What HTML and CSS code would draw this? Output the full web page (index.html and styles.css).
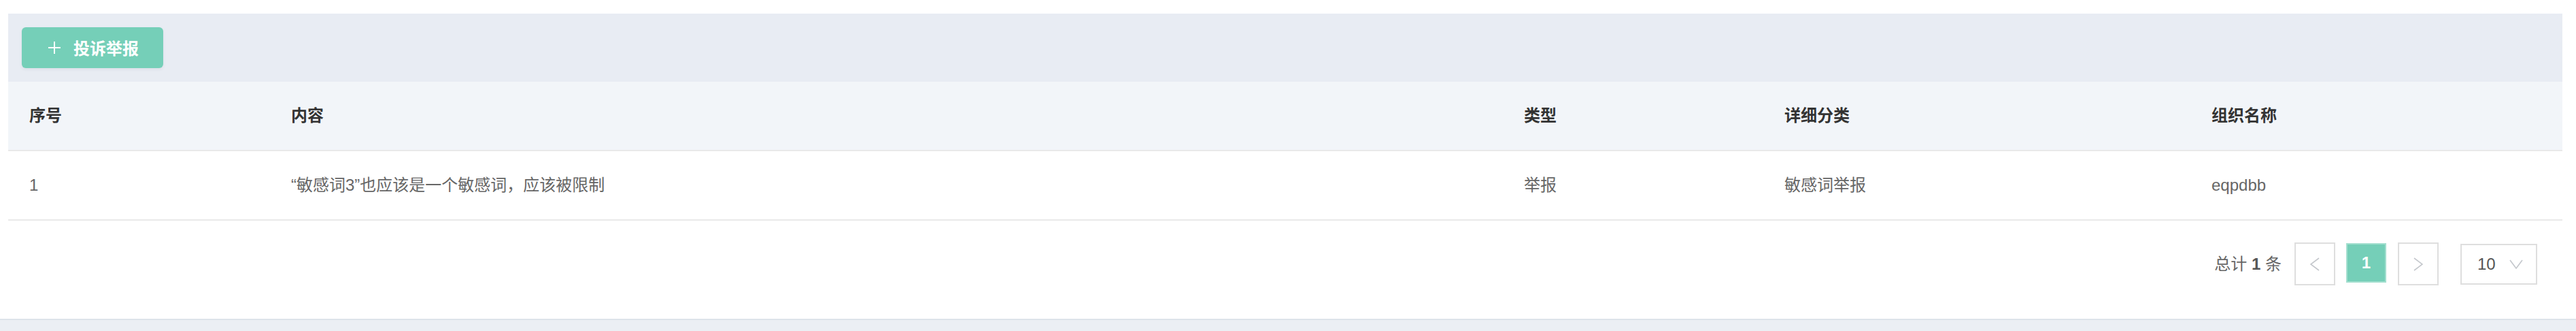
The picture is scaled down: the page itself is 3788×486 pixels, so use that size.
FILE: index.html
```html
<!DOCTYPE html>
<html lang="zh-CN">
<head>
<meta charset="utf-8">
<title>投诉举报</title>
<link rel="stylesheet" href="styles.css">
</head>
<body>
<div class="page">
  <div class="panel">
    <div class="toolbar">
      <button class="btn-add" type="button">
        <svg class="plus" width="18" height="18" viewBox="0 0 18 18"><path d="M9 0V18M0 9H18" stroke="#fff" stroke-width="2"/></svg>
        <span>投诉举报</span>
      </button>
    </div>
    <div class="table">
      <div class="row head">
        <div class="cell">序号</div>
        <div class="cell">内容</div>
        <div class="cell">类型</div>
        <div class="cell">详细分类</div>
        <div class="cell">组织名称</div>
      </div>
      <div class="row body">
        <div class="cell">1</div>
        <div class="cell">“敏感词3”也应该是一个敏感词，应该被限制</div>
        <div class="cell">举报</div>
        <div class="cell">敏感词举报</div>
        <div class="cell">eqpdbb</div>
      </div>
    </div>
    <div class="pager">
      <span class="total">总计 <b>1</b> 条</span>
      <span class="pg-btn">
        <svg width="14" height="20" viewBox="0 0 14 20"><polyline points="13,1 1,10 13,19" fill="none" stroke="#c4c7cc" stroke-width="1.6"/></svg>
      </span>
      <span class="pg-num active">1</span>
      <span class="pg-btn">
        <svg width="14" height="20" viewBox="0 0 14 20"><polyline points="1,1 13,10 1,19" fill="none" stroke="#c4c7cc" stroke-width="1.6"/></svg>
      </span>
      <span class="pg-size">
        <span class="size-val">10</span>
        <svg width="20" height="14" viewBox="0 0 20 14"><polyline points="1,1 10,13 19,1" fill="none" stroke="#c4c7cc" stroke-width="1.6"/></svg>
      </span>
    </div>
  </div>
</div>
<div class="strip"></div>
</body>
</html>
```
FILE: styles.css
```css
html, body {
  margin: 0;
  padding: 0;
  background: #ffffff;
}

body {
  font-family: "Liberation Sans", "Noto Sans CJK SC", sans-serif;
  font-size: 24px;
  color: #666666;
}

.page {
  padding: 20px 20px 0 12px;
}

.panel {
  width: 3756px;
  background: #ffffff;
}

.toolbar {
  background: #e8ecf3;
  padding: 20px 20px;
  height: 60px;
}

.btn-add {
  display: flex;
  align-items: center;
  gap: 19px;
  width: 208px;
  height: 60px;
  padding: 0 0 0 39px;
  border: none;
  border-radius: 6px;
  background: #75cfb8;
  color: #ffffff;
  font-family: "Noto Sans CJK SC", sans-serif;
  font-size: 24px;
  font-weight: 600;
  line-height: 1;
  box-shadow: 0 2px 4px rgba(60, 80, 100, 0.08);
}

.plus {
  flex: none;
}

.table {
  display: flex;
  flex-direction: column;
}

.row {
  display: grid;
  grid-template-columns: 385px 1813px 383px 628px 547px;
  height: 100px;
  border-bottom: 2px solid #e9e9e9;
  align-items: center;
}

.row.head {
  background: #f2f5f9;
  color: #333333;
  font-weight: 600;
}

.row.body {
  color: #666666;
}

.cell {
  padding-left: 31px;
  line-height: 32px;
  white-space: nowrap;
}

.pager {
  display: flex;
  justify-content: flex-end;
  align-items: flex-start;
  height: 112px;
  padding: 32px 37px 0 0;
}

.total {
  height: 63px;
  line-height: 63px;
  margin-right: 19px;
  color: #666666;
}

.total b {
  color: #555555;
  font-weight: 700;
}

.pg-btn {
  box-sizing: border-box;
  width: 60px;
  height: 63px;
  border: 2px solid #dedede;
  display: flex;
  align-items: center;
  justify-content: center;
  background: #ffffff;
}

.pg-num {
  box-sizing: border-box;
  width: 59px;
  height: 58px;
  margin: 1px 17px 0 16px;
  display: flex;
  align-items: center;
  justify-content: center;
  font-weight: 700;
  font-size: 24px;
}

.pg-num.active {
  background: #75cfb8;
  border: 2px solid #a3dfcf;
  color: #ffffff;
}

.pg-size {
  box-sizing: border-box;
  width: 113px;
  height: 60px;
  margin: 2px 0 0 32px;
  border: 2px solid #dedede;
  display: flex;
  align-items: center;
  padding-left: 23px;
  gap: 20px;
  color: #555555;
}

.size-val {
  line-height: 1;
}

.strip {
  height: 16px;
  background: #ebeff4;
  border-top: 2px solid #dde3ea;
}
```
